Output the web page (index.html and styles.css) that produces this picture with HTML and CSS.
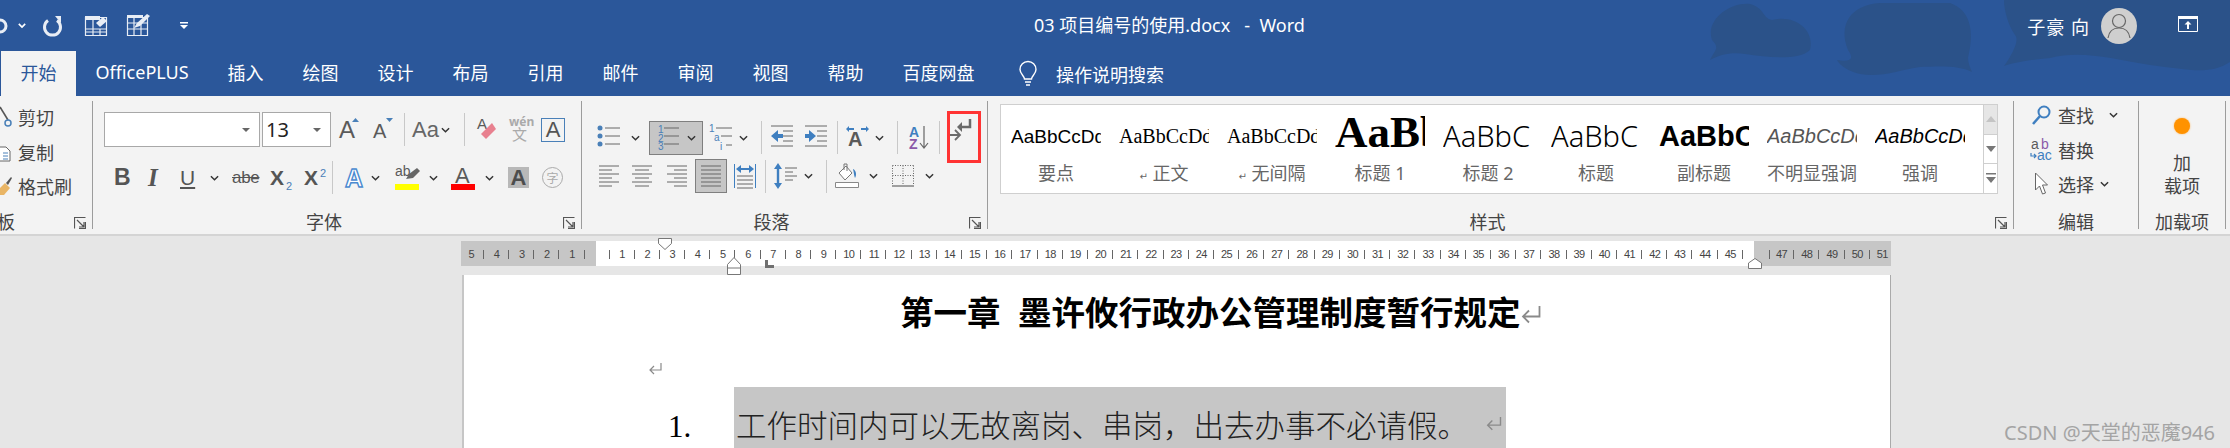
FILE: index.html
```html
<!DOCTYPE html>
<html lang="zh-CN">
<head>
    <meta charset="UTF-8">
    <title>03 项目编号的使用.docx - Word</title>
    <link rel="stylesheet" href="styles.css">
</head>
<body>
    <svg class="sprite" aria-hidden="true">
        <symbol id="chev" viewBox="0 0 10 6"><path d="M1 1l4 4 4-4" fill="none" stroke="#333" stroke-width="1.6"/></symbol>
        <symbol id="launcher" viewBox="0 0 12 12"><path d="M.5 11.5V.5h11M5 .5M11.5 5v6.5H5M3 3l7 7M10 5v5H5" fill="none" stroke="#555" stroke-width="1.2"/></symbol>
        <symbol id="mark" viewBox="0 0 14 12"><path d="M13 0v7H2M6 3L2 7l4 4" fill="none" stroke="#8a8a8a" stroke-width="1.2"/></symbol>
    </svg>

    <header class="blue">
        <svg class="blobs" viewBox="1600 0 630 96" width="630" height="96" aria-hidden="true">
            <path d="M1710 60C1715 50 1720 48 1712 40C1705 20 1730 2 1750 4C1765 8 1762 18 1772 20C1795 14 1815 30 1810 50C1800 60 1770 58 1745 54C1730 52 1720 55 1710 60Z"/>
            <path d="M1837 60C1850 62 1855 60 1848 50C1838 25 1850 5 1880 3L1950 3C1970 10 1975 30 1968 58C1968 62 1970 68 1972 72C1960 66 1945 66 1920 67C1900 70 1880 78 1860 74C1850 72 1840 66 1837 60Z"/>
            <path d="M2004 66C2012 55 2020 40 2015 35C2008 25 2004 10 2004 0L2230 0L2230 62C2210 75 2190 70 2150 65C2110 58 2080 50 2050 58C2030 60 2015 62 2004 66Z"/>
        </svg>
        <div class="titlebar">
            <div class="qat">
                <svg width="8" height="18" viewBox="0 0 8 18"><circle cx="0" cy="9" r="6" fill="none" stroke="#e8edf5" stroke-width="3"/></svg>
                <svg class="qat-chev" width="8" height="5" viewBox="0 0 10 6"><path d="M1 1l4 4 4-4" fill="none" stroke="#fff" stroke-width="2"/></svg>
                <svg class="qat-redo" width="20" height="20" viewBox="0 0 20 20"><path d="M14 4.5A8 8 0 1 1 5 4.5" fill="none" stroke="#e8edf5" stroke-width="3"/><path d="M12 0h6v7z" fill="#e8edf5"/></svg>
                <svg class="qat-table" width="22" height="20" viewBox="0 0 22 20"><path d="M.5 1.5h21v18H.5zM.5 13h21M.5 16h21M8 1.5v18M15 13v6.5" fill="none" stroke="#e8edf5" stroke-width="1.2"/><path d="M0 0h15v4H0z" fill="#e8edf5"/><path d="M11 7l7-6 4 4-7 6z" fill="#e8edf5"/></svg>
                <svg class="qat-pen" width="24" height="23" viewBox="0 0 24 23"><path d="M.5 4.5h20v18H.5zM.5 10h20M.5 16h20M7 4.5v18M14 10v12.5" fill="none" stroke="#e8edf5" stroke-width="1.2"/><path d="M0 2h16v3H0z" fill="#e8edf5"/><path d="M7 15l3-5L20 1l3 2-10 10z" fill="#e8edf5"/></svg>
                <svg class="qat-more" width="8" height="7" viewBox="0 0 8 7"><path d="M0 0h8v1.5H0zM0 3h8L4 7z" fill="#fff"/></svg>
            </div>
            <div class="doc-title">03 项目编号的使用.docx &nbsp;&nbsp;-&nbsp; Word</div>
            <div class="user-name">子豪 向</div>
            <svg class="avatar" width="36" height="36" viewBox="0 0 36 36"><circle cx="18" cy="18" r="18" fill="#cfcfcf"/><circle cx="18" cy="13" r="6.5" fill="none" stroke="#666" stroke-width="1.2"/><path d="M7 30c1-7 5-10 11-10s10 3 11 10" fill="none" stroke="#666" stroke-width="1.2"/></svg>
            <svg class="display-opts" width="20" height="16" viewBox="0 0 20 16"><path d="M.5.5h19v15H.5z" fill="none" stroke="#fff"/><path d="M0 0h20v3H0zM10 5l3.5 3.5H11V13H9V8.500H6.500z" fill="#fff"/></svg>
        </div>
        <nav class="tabs">
            <span class="tab active">开始</span>
            <span class="tab">OfficePLUS</span>
            <span class="tab">插入</span>
            <span class="tab">绘图</span>
            <span class="tab">设计</span>
            <span class="tab">布局</span>
            <span class="tab">引用</span>
            <span class="tab">邮件</span>
            <span class="tab">审阅</span>
            <span class="tab">视图</span>
            <span class="tab">帮助</span>
            <span class="tab">百度网盘</span>
            <svg class="bulb" width="18" height="24" viewBox="0 0 18 24"><path d="M5.500 17c0-3-4.500-5-4.500-9.500a8 8 0 0 1 16 0C17 12 12.500 14 12.500 17zM6 20h6M7 23h4" fill="none" stroke="#fff" stroke-width="1.400"/></svg>
            <span class="tell-me">操作说明搜索</span>
        </nav>
    </header>

    <div class="ribbon">
        <section class="group clip">
            <div class="group-body">
                <div class="clip-row">
                    <svg width="12" height="20" viewBox="0 0 12 20"><path d="M0 0l8 13" stroke="#555" stroke-width="1.600"/><circle cx="8" cy="16" r="3" fill="none" stroke="#4a80b8" stroke-width="1.500"/></svg>
                    <span>剪切</span>
                </div>
                <div class="clip-row">
                    <svg width="12" height="20" viewBox="0 0 12 20"><path d="M0 5h6l4 4v10H0" fill="#fff" stroke="#666"/><path d="M3 11h5M3 14h5M3 17h5" stroke="#4a80b8"/></svg>
                    <span>复制</span>
                </div>
                <div class="clip-row">
                    <svg width="12" height="20" viewBox="0 0 12 20"><path d="M0 12l5-5 5 5-6 7H0z" fill="#e9b565"/><path d="M6 7l5-6 1 1-4 7z" fill="#555"/></svg>
                    <span>格式刷</span>
                </div>
            </div>
            <div class="group-label"><span>剪贴板</span><svg class="launcher"><use href="#launcher"/></svg></div>
        </section>

        <section class="group font">
            <div class="group-body">
                <div class="font-row1">
                    <div class="combo name-box"><i class="caret"></i></div>
                    <div class="combo size-box"><span>13</span><i class="caret"></i></div>
                    <svg width="22" height="35" viewBox="0 0 22 35"><text x="0" y="26" class="ico-a big">A</text><path d="M13 10h7l-3.500-4z" fill="#4a80b8"/></svg>
                    <svg width="22" height="35" viewBox="0 0 22 35"><text x="0" y="26" class="ico-a mid">A</text><path d="M13 6h7l-3.500 4z" fill="#4a80b8"/></svg>
                    <i class="tool-sep"></i>
                    <span class="change-case">Aa</span>
                    <svg class="chev"><use href="#chev"/></svg>
                    <i class="tool-sep"></i>
                    <svg width="22" height="35" viewBox="0 0 22 35"><text x="0" y="17" class="ico-a small">A</text><path d="M4 22l11-11 4 6-10 10z" fill="#e8808f"/></svg>
                    <svg width="24" height="35" viewBox="0 0 24 35"><text x="0" y="14" class="ico-pale wen">wén</text><text x="3" y="28" class="ico-pale wen-zh">文</text></svg>
                    <span class="box-a">A</span>
                </div>
                <div class="font-row2">
                    <span class="fmt bold">B</span>
                    <span class="fmt ital">I</span>
                    <span class="fmt under">U</span>
                    <svg class="chev"><use href="#chev"/></svg>
                    <span class="fmt strike">abe</span>
                    <span class="fmt script">X<sub>2</sub></span>
                    <span class="fmt script">X<sup>2</sup></span>
                    <i class="tool-sep"></i>
                    <svg width="20" height="30" viewBox="0 0 20 30"><text x="1" y="24" class="ico-glow">A</text></svg>
                    <svg class="chev"><use href="#chev"/></svg>
                    <svg width="26" height="30" viewBox="0 0 26 30"><text x="0" y="13" class="ico-ab">ab</text><path d="M11 16l3-5 8-6 3 3-7 7z" fill="#666"/><path d="M0 21h24v6H0z" fill="#ff0"/></svg>
                    <svg class="chev"><use href="#chev"/></svg>
                    <svg width="24" height="30" viewBox="0 0 24 30"><text x="4" y="20" class="ico-a color-a">A</text><path d="M0 21h24v6H0z" fill="#f00"/></svg>
                    <svg class="chev"><use href="#chev"/></svg>
                    <span class="shaded-a">A</span>
                    <span class="circle-zi">字</span>
                </div>
            </div>
            <div class="group-label"><span>字体</span><svg class="launcher"><use href="#launcher"/></svg></div>
        </section>

        <section class="group para">
            <div class="group-body">
                <div class="para-row1">
                    <svg width="24" height="35" viewBox="0 0 24 35"><g fill="#4a80b8"><circle cx="3" cy="8" r="2.500"/><circle cx="3" cy="16" r="2.500"/><circle cx="3" cy="24" r="2.500"/></g><path d="M8 8h15M8 16h15M8 24h15" stroke="#666"/></svg>
                    <svg class="chev"><use href="#chev"/></svg>
                    <div class="active-tool num-list">
                        <svg width="24" height="33" viewBox="0 0 24 33"><g class="ico-num"><text x="5" y="12">1</text><text x="5" y="21">2</text><text x="5" y="29">3</text></g><path d="M11 7h15M11 15h15M11 23h15" stroke="#666"/></svg>
                        <svg class="chev"><use href="#chev"/></svg>
                    </div>
                    <svg width="24" height="35" viewBox="0 0 24 35"><g class="ico-num"><text x="0" y="12">1</text><text x="5" y="21">a</text><text x="11" y="30">i</text></g><path d="M7 8h16M12 16h11M17 25h6" stroke="#666"/></svg>
                    <svg class="chev"><use href="#chev"/></svg>
                    <i class="tool-sep"></i>
                    <svg width="22" height="35" viewBox="0 0 22 35"><path d="M0 6h22M12 11h10M12 16h10M12 21h10M0 26h22" stroke="#666"/><path d="M0 16l7-6v4h5v4H7v4z" fill="#3f7fc0"/></svg>
                    <svg width="22" height="35" viewBox="0 0 22 35"><path d="M0 6h22M12 11h10M12 16h10M12 21h10M0 26h22" stroke="#666"/><path d="M11 16l-7-6v4H0v4h4v4z" fill="#3f7fc0"/></svg>
                    <i class="tool-sep"></i>
                    <svg width="24" height="35" viewBox="0 0 24 35"><text x="2" y="26" class="ico-a layout-a">A</text><path d="M0 9l3-3v2h5v2H3v2zM23 9l-3-3v2h-5v2h5v2z" fill="#3f7fc0"/></svg>
                    <svg class="chev"><use href="#chev"/></svg>
                    <i class="tool-sep"></i>
                    <svg width="20" height="35" viewBox="0 0 20 35"><text x="0" y="17" class="ico-az az-a">A</text><text x="0" y="29" class="ico-az az-z">Z</text><path d="M15 6v21M11 23l4 5 4-5" fill="none" stroke="#666" stroke-width="1.200"/></svg>
                    <i class="tool-sep"></i>
                    <div class="marks-btn">
                        <svg width="24" height="28" viewBox="0 0 24 28"><path d="M20 5v8H10" fill="none" stroke="#6a6a6a" stroke-width="2.500"/><path d="M12 8l-5 5 5 5z" fill="#6a6a6a"/><path d="M0 21h9M5 16l5 5-5 5" fill="none" stroke="#6a6a6a" stroke-width="1.800"/></svg>
                    </div>
                </div>
                <div class="para-row2">
                    <svg width="20" height="24" viewBox="0 0 20 24"><path d="M0 2h20M0 6h13M0 10h20M0 14h13M0 18h20M0 22h13" stroke="#666"/></svg>
                    <svg width="20" height="24" viewBox="0 0 20 24"><path d="M0 2h20M3 6h14M0 10h20M3 14h14M0 18h20M3 22h14" stroke="#666"/></svg>
                    <svg width="20" height="24" viewBox="0 0 20 24"><path d="M0 2h20M7 6h13M0 10h20M7 14h13M0 18h20M7 22h13" stroke="#666"/></svg>
                    <div class="active-tool justify">
                        <svg width="20" height="24" viewBox="0 0 20 24"><path d="M0 2h20M0 6h20M0 10h20M0 14h20M0 18h20M0 22h20" stroke="#666"/></svg>
                    </div>
                    <svg width="22" height="26" viewBox="0 0 22 26"><path d="M.5 1v24M21.500 1v24" stroke="#3f7fc0"/><path d="M4 6h14" stroke="#3f7fc0" stroke-width="2"/><path d="M7 2L2 6l5 4zM15 2l5 4-5 4z" fill="#3f7fc0"/><path d="M3 13h16M3 17h16M3 21h16M3 25h16" stroke="#666"/></svg>
                    <i class="tool-sep"></i>
                    <svg width="24" height="26" viewBox="0 0 24 26"><path d="M4 3v20" stroke="#3f7fc0" stroke-width="2.400"/><path d="M4 0l4 6H0zM4 26l4-6H0z" fill="#3f7fc0"/><path d="M11 5h12M11 9h8M11 13h12M11 17h8" stroke="#666"/></svg>
                    <svg class="chev"><use href="#chev"/></svg>
                    <i class="tool-sep"></i>
                    <svg width="24" height="26" viewBox="0 0 24 26"><path d="M.5 19.500h23v5H.5z" fill="#fff" stroke="#888"/><path d="M4 10l7-7 6 7-7 7z" fill="#fff" stroke="#777"/><path d="M9 7V1h3v7" fill="none" stroke="#777"/><path d="M18 6c3 1 4 6 2 9-1-2-1-5-2-9z" fill="#3f7fc0"/></svg>
                    <svg class="chev"><use href="#chev"/></svg>
                    <svg width="22" height="22" viewBox="0 0 22 22"><path d="M.5.500h21M.5.500v20M21.500.500v20M.5 10.500h21M11 .5v20" fill="none" stroke="#666" stroke-dasharray="1 1.500"/><path d="M0 21h22" stroke="#666" stroke-width="1.200"/></svg>
                    <svg class="chev"><use href="#chev"/></svg>
                </div>
            </div>
            <div class="group-label"><span>段落</span><svg class="launcher"><use href="#launcher"/></svg></div>
        </section>

        <section class="group styles">
            <div class="group-body">
                <div class="gallery">
                    <div class="style-list">
                        <div class="style-item"><div class="preview pv-key">AaBbCcDd</div><div class="style-name">要点</div></div>
                        <div class="style-item"><div class="preview pv-serif">AaBbCcDd</div><div class="style-name"><small>↵</small> 正文</div></div>
                        <div class="style-item"><div class="preview pv-serif">AaBbCcDd</div><div class="style-name"><small>↵</small> 无间隔</div></div>
                        <div class="style-item"><div class="preview pv-h1">AaBb</div><div class="style-name">标题 1</div></div>
                        <div class="style-item"><div class="preview pv-head">AaBbC</div><div class="style-name">标题 2</div></div>
                        <div class="style-item"><div class="preview pv-head">AaBbC</div><div class="style-name">标题</div></div>
                        <div class="style-item"><div class="preview pv-sub">AaBbC</div><div class="style-name">副标题</div></div>
                        <div class="style-item"><div class="preview pv-em pale">AaBbCcDd</div><div class="style-name">不明显强调</div></div>
                        <div class="style-item"><div class="preview pv-em">AaBbCcDd</div><div class="style-name">强调</div></div>
                    </div>
                    <div class="gallery-scroll">
                        <div class="scroll-btn off"><svg width="10" height="6" viewBox="0 0 10 6"><path d="M5 0l5 6H0z" fill="#c4c4c4"/></svg></div>
                        <div class="scroll-btn"><svg width="10" height="6" viewBox="0 0 10 6"><path d="M5 6L0 0h10z" fill="#777"/></svg></div>
                        <div class="scroll-btn"><svg width="10" height="11" viewBox="0 0 10 11"><path d="M0 0h10v1.500H0zM0 4h10l-5 6z" fill="#777"/></svg></div>
                    </div>
                </div>
            </div>
            <div class="group-label"><span>样式</span><svg class="launcher"><use href="#launcher"/></svg></div>
        </section>

        <section class="group edit">
            <div class="group-body">
                <div class="edit-row">
                    <svg class="edit-ico" width="24" height="20" viewBox="0 0 24 20"><circle cx="14" cy="7" r="5.500" fill="none" stroke="#3f7fc0" stroke-width="2"/><path d="M10 11l-7 8" stroke="#3f7fc0" stroke-width="2.500"/></svg>
                    <span>查找</span>
                    <svg class="chev edit-chev"><use href="#chev"/></svg>
                </div>
                <div class="edit-row">
                    <svg class="edit-ico" width="24" height="22" viewBox="0 0 24 22"><text x="1" y="10" class="ab-a">a</text><text x="11" y="10" class="ab-b">b</text><text x="7" y="21" class="ab-c">ac</text><path d="M1 14v3h5M4 15l2 2-2 2" fill="none" stroke="#3f7fc0" stroke-width="1.200"/></svg>
                    <span>替换</span>
                </div>
                <div class="edit-row">
                    <svg class="edit-ico" width="24" height="24" viewBox="0 0 24 24"><path d="M5.500 1v17l4-4 3 8 3-1-3-8h5z" fill="#fff" stroke="#666"/></svg>
                    <span>选择</span>
                    <svg class="chev select-chev"><use href="#chev"/></svg>
                </div>
            </div>
            <div class="group-label"><span>编辑</span></div>
        </section>

        <section class="group addin">
            <div class="group-body">
                <div class="addin-dot"></div>
                <div class="addin-text">加<br>载项</div>
            </div>
            <div class="group-label"><span>加载项</span></div>
        </section>
    </div>

    <main class="doc-area">
        <div class="ruler">
            <div class="ruler-side left"><span>5</span><span>4</span><span>3</span><span>2</span><span>1</span></div>
            <div class="ruler-main" id="rulerMain"></div>
            <div class="ruler-side right"><span>47</span><span>48</span><span>49</span><span>50</span><span>51</span></div>
            <svg class="marker first-line" width="14" height="12" viewBox="0 0 14 12"><path d="M.5.500h13v5L7 11.500.5 5.500z" fill="#fff" stroke="#777"/></svg>
            <svg class="marker hanging" width="14" height="18" viewBox="0 0 14 18"><path d="M7 .5l6.500 7v10H.5v-10zM.5 11h13" fill="#fff" stroke="#777"/></svg>
            <i class="marker tab-stop"></i>
            <svg class="marker right-indent" width="14" height="11" viewBox="0 0 14 11"><path d="M7 .5l6.500 4.500v5.500H.5V5z" fill="#fff" stroke="#777"/></svg>
        </div>
        <article class="page">
            <h1 class="doc-head">第一章&nbsp; 墨许攸行政办公管理制度暂行规定<svg class="para-mark head-mark"><use href="#mark"/></svg></h1>
            <p class="empty-line"><svg class="para-mark"><use href="#mark"/></svg></p>
            <div class="list-item">
                <span class="list-num">1.</span>
                <span class="selected">工作时间内可以无故离岗、串岗，出去办事不必请假。<svg class="para-mark sel-mark"><use href="#mark"/></svg></span>
            </div>
        </article>
        <div class="watermark">CSDN @天堂的恶魔946</div>
    </main>

    <script>
        // ruler numbers 1 - 45
        const rulerMain = document.getElementById('rulerMain');
        for (let i = 1; i <= 45; i++) {
            const cell = document.createElement('span');
            cell.textContent = i;
            rulerMain.appendChild(cell);
        }
    </script>
</body>
</html>
```
FILE: styles.css
```css
* {
    margin: 0;
    padding: 0;
    box-sizing: border-box;
}

body {
    width: 2230px;
    height: 448px;
    overflow: hidden;
    background-color: #e6e6e6;
    font-family: "Noto Sans", "Noto Sans CJK SC", sans-serif;
    font-size: 18px;
    color: #444;
}

svg {
    display: block;
    overflow: visible;
}

i {
    display: block;
}

.sprite {
    position: absolute;
    width: 0;
    height: 0;
}

/* title bar and tabs */
.blue {
    position: relative;
    height: 96px;
    background-color: #2b579a;
    color: #fff;
}

.blobs {
    position: absolute;
    top: 0;
    right: 0;
    fill: #2b5289;
}

.titlebar {
    position: relative;
    display: flex;
    align-items: center;
    height: 51px;
}

.qat {
    display: flex;
    align-items: center;
    width: 1034px;
}

.qat-chev { margin-left: 10px; }
.qat-redo { margin-left: 17px; }
.qat-table { margin-left: 22px; }
.qat-pen { margin-left: 20px; margin-top: -2px; }
.qat-more { margin-left: 29px; }

.doc-title {
    line-height: 1;
    margin-top: -2px;
}

.user-name {
    margin-left: auto;
    font-size: 18px;
    letter-spacing: 1px;
}

.avatar {
    margin-left: 11px;
}

.display-opts {
    margin-left: 41px;
    margin-right: 32px;
    margin-top: -3px;
}

.tabs {
    position: relative;
    display: flex;
    align-items: center;
    height: 45px;
    padding-left: 1px;
}

.tab {
    display: flex;
    align-items: center;
    height: 45px;
    padding: 0 19.5px 3px;
}

.tab.active {
    background-color: #f3f3f3;
    color: #2b579a;
}

.bulb {
    margin-left: 25px;
}

.tell-me {
    margin-left: 19px;
}

/* ribbon */
.ribbon {
    display: flex;
    height: 140px;
    padding-top: 5px;
    background-color: #f3f3f3;
    border-bottom: 2px solid #d4d4d4;
}

.group {
    display: flex;
    flex-direction: column;
    flex-shrink: 0;
    height: 128px;
    border-right: 1px solid #9c9c9c;
}

.group-body {
    height: 111px;
}

.group-label {
    display: flex;
    height: 17px;
    line-height: 20px;
}

.group-label span {
    flex: 1;
    padding-right: 8px;
    text-align: center;
    white-space: nowrap;
}

.launcher {
    width: 12px;
    height: 12px;
    margin: 5px 6px 0 0;
}

.clip { width: 183px; margin-left: -90px; }
.font { width: 489px; }
.para { width: 406px; }
.styles { width: 1026px; }
.edit { width: 125px; }
.addin { width: 87px; }

.edit .group-label span, .addin .group-label span {
    padding-right: 0;
}

.clip .group-body {
    padding-left: 90px;
}

.clip-row {
    display: flex;
    align-items: center;
    gap: 6px;
    height: 34.5px;
    position: relative;
    top: -1px;
}

/* font group */
.font-row1, .font-row2, .para-row1, .para-row2 {
    display: grid;
    align-items: center;
    justify-items: start;
}

.font-row1 {
    grid-template-columns: 158px 77px 34px 31px 8px 29px 23px 13px 32px 32px auto;
    height: 35px;
    margin: 11px 0 0 11px;
}

.font-row2 {
    grid-template-columns: 34px 32px 30px 22px 38px 34px 28px 12px 27px 24px 34px 22px 34px 23px 34px auto;
    height: 30px;
    margin: 14px 0 0 21px;
}

.combo {
    display: flex;
    align-items: center;
    justify-content: space-between;
    height: 35px;
    padding: 0 9px 0 3px;
    background-color: #fff;
    border: 1px solid #a8a8a8;
    font-size: 20px;
    color: #222;
}

.name-box { width: 156px; justify-content: flex-end; }
.size-box { width: 69px; }

.caret {
    width: 0;
    height: 0;
    border-left: 4px solid transparent;
    border-right: 4px solid transparent;
    border-top: 4px solid #666;
}

.tool-sep {
    width: 1px;
    height: 33px;
    background-color: #c8c8c8;
}

.chev {
    width: 9px;
    height: 6px;
}

.ico-a {
    font-family: "Liberation Sans", sans-serif;
    fill: #5a5a5a;
}

.big { font-size: 24px; }
.mid { font-size: 20px; }
.small { font-size: 15px; }
.color-a { font-size: 22px; }
.layout-a { font-size: 20px; font-weight: bold; }

.change-case {
    font-family: "Liberation Sans", sans-serif;
    font-size: 22px;
    color: #666;
}

.ico-pale { fill: #aaa; }
.wen { font-size: 12px; font-weight: bold; }
.wen-zh { font-size: 15px; }

.box-a {
    display: flex;
    align-items: center;
    justify-content: center;
    width: 24px;
    height: 24px;
    border: 1px solid #4a80b8;
    font-family: "Liberation Sans", sans-serif;
    font-size: 22px;
    color: #555;
}

.fmt {
    font-family: "Liberation Sans", sans-serif;
    color: #555;
    line-height: 1;
}

.bold { font-size: 23px; font-weight: bold; }
.ital { font-family: "Liberation Serif", serif; font-size: 25px; font-style: italic; font-weight: bold; }
.under { font-size: 21px; text-decoration: underline; text-underline-offset: 2px; }
.strike { font-size: 17px; text-decoration: line-through; letter-spacing: -.3px; }
.script { font-size: 21px; font-weight: bold; position: relative; }

.script sub, .script sup {
    font-size: 11px;
    font-weight: normal;
    color: #4a80b8;
    line-height: 0;
    margin-left: 2px;
}

.ico-glow {
    font-family: "Liberation Sans", sans-serif;
    font-size: 25px;
    font-weight: bold;
    fill: #fff;
    stroke: #4a8ad0;
    stroke-width: 1.400;
}

.ico-ab {
    font-family: "Liberation Sans", sans-serif;
    font-size: 14px;
    fill: #5a5a5a;
}

.shaded-a {
    display: flex;
    align-items: center;
    justify-content: center;
    width: 21px;
    height: 21px;
    background-color: #b8b8b8;
    font-family: "Liberation Sans", sans-serif;
    font-size: 22px;
    font-weight: bold;
    color: #4d4d4d;
}

.circle-zi {
    display: flex;
    align-items: center;
    justify-content: center;
    width: 21px;
    height: 21px;
    border: 1px solid #aaa;
    border-radius: 50%;
    font-size: 12px;
    color: #aaa;
}

/* paragraph group */
.para-row1 {
    grid-template-columns: 34px 18px 60px 30px 22px 10px 34px 32px 9px 29px 22px 12px 30px 8px auto;
    height: 35px;
    margin: 11px 0 0 15px;
}

.para-row2 {
    grid-template-columns: 33px 35px 28px 39px 31px 9px 30px 22px 9px 34px 23px 33px auto;
    height: 34px;
    margin: 12px 0 0 17px;
}

.active-tool {
    display: flex;
    align-items: center;
    background-color: #c6c6c6;
    border: 1px solid #7f7f7f;
}

.num-list {
    gap: 10px;
    width: 54px;
    height: 34px;
    padding-left: 3px;
}

.justify {
    justify-content: center;
    width: 32px;
    height: 34px;
}

.ico-num {
    font-family: "Liberation Sans", sans-serif;
    font-size: 10px;
    fill: #4a80b8;
}

.ico-az {
    font-family: "Liberation Sans", sans-serif;
    font-size: 14px;
    font-weight: bold;
}

.az-a { fill: #3f7fc0; }
.az-z { fill: #8b5aa8; }

.marks-btn {
    align-self: start;
    width: 34px;
    height: 52px;
    margin-top: -1px;
    border: 3px solid #f33;
}

/* styles gallery */
.gallery {
    display: flex;
    width: 998px;
    height: 90px;
    margin: 3px 0 0 12px;
    background-color: #fff;
    border: 1px solid #cfcfcf;
}

.style-list {
    display: flex;
    flex: 1;
    padding-left: 10px;
}

.style-item {
    width: 108px;
    flex-shrink: 0;
}

.preview {
    display: flex;
    align-items: flex-end;
    width: 90px;
    height: 53px;
    overflow: hidden;
    white-space: nowrap;
    color: #000;
    font-family: "Liberation Sans", sans-serif;
}

.pv-key { font-size: 19px; padding-bottom: 10px; }
.pv-serif { font-family: "Liberation Serif", serif; font-size: 20px; padding-bottom: 10px; }
.pv-h1 { font-family: "Liberation Serif", serif; font-size: 45px; font-weight: bold; line-height: 42px; padding-bottom: 5px; }
.pv-head { font-family: "Noto Sans", sans-serif; font-size: 29px; font-weight: 300; line-height: 44px; }
.pv-sub { font-size: 29px; font-weight: bold; line-height: 44px; }
.pv-em { font-size: 20px; font-style: italic; padding-bottom: 10px; }
.pale { color: #555; }

.style-name {
    width: 90px;
    margin-top: 5px;
    text-align: center;
    line-height: 20px;
    white-space: nowrap;
    color: #666;
}

.style-name small {
    font-family: "DejaVu Sans", sans-serif;
    font-size: 10px;
}

.gallery-scroll {
    display: flex;
    flex-direction: column;
    width: 22px;
    border-left: 1px solid #cfcfcf;
}

.scroll-btn {
    display: flex;
    align-items: center;
    justify-content: center;
    flex: 1;
    border-bottom: 1px solid #cfcfcf;
}

.scroll-btn:last-child { border-bottom: none; }
.scroll-btn.off { background-color: #e6e6e6; }

/* editing group */
.edit-row {
    display: flex;
    align-items: center;
    height: 34.5px;
    padding-left: 16px;
    position: relative;
    top: -3px;
}

.edit-ico {
    margin-right: 4px;
    flex-shrink: 0;
}

.edit-chev { margin-left: 15px; }
.select-chev { margin-left: 6px; }

.ab-a, .ab-b, .ab-c {
    font-family: "Liberation Sans", sans-serif;
    font-size: 14px;
}

.ab-a { fill: #5a5a5a; }
.ab-b { fill: #8b5aa8; }
.ab-c { fill: #3f7fc0; }

/* add-ins group */
.addin-dot {
    width: 16px;
    height: 16px;
    margin: 17px auto 0;
    border-radius: 50%;
    background-color: #ff9200;
    box-shadow: 0 0 2px #ffb255;
}

.addin-text {
    margin-top: 18px;
    text-align: center;
    line-height: 23px;
}

/* document area */
.doc-area {
    position: relative;
    padding: 5px 339px 0 461px;
}

.ruler {
    position: relative;
    display: flex;
    height: 25px;
    font-family: "Liberation Sans", sans-serif;
    font-size: 11px;
    color: #444;
}

.ruler-side, .ruler-main {
    display: flex;
    align-items: center;
    flex-shrink: 0;
    overflow: hidden;
}

.ruler-side {
    background-color: #c6c6c6;
}

.ruler-side.left {
    justify-content: flex-end;
    width: 135px;
    padding-right: 11.4px;
}

.ruler-main {
    width: 1158px;
    padding-left: 13.4px;
    background-color: #fff;
}

.ruler-side.right {
    width: 137px;
    padding-left: 15px;
}

.ruler span {
    position: relative;
    flex: 0 0 25.2px;
    text-align: center;
    letter-spacing: -.6px;
}

.ruler span::after {
    content: "";
    position: absolute;
    top: 2px;
    right: 0;
    width: 1px;
    height: 9px;
    background-color: #666;
}

.ruler-main span:first-child::before,
.ruler-side.right span:first-child::before {
    content: "";
    position: absolute;
    top: 2px;
    left: 0;
    width: 1px;
    height: 9px;
    background-color: #666;
}

.marker {
    position: absolute;
}

.first-line { left: 197px; top: -3px; }
.hanging { left: 266px; top: 16px; }
.tab-stop {
    left: 304px;
    top: 19px;
    width: 9px;
    height: 8px;
    border-left: 3px solid #707070;
    border-bottom: 3px solid #707070;
}
.right-indent { left: 1287px; top: 17px; }

.page {
    height: 173px;
    margin: 9px 0 0 1px;
    padding-top: 17px;
    background-color: #fff;
    border-left: 2px solid #c6c6c6;
    border-right: 1px solid #aaa;
    color: #000;
    overflow: hidden;
}

.doc-head {
    display: flex;
    align-items: flex-end;
    padding-left: 436px;
    font-size: 33.5px;
    font-weight: bold;
    line-height: 40px;
    white-space: pre;
}

.para-mark {
    width: 14px;
    height: 12px;
}

.head-mark {
    width: 21px;
    height: 20px;
    margin-bottom: 7px;
}

.empty-line {
    height: 55px;
    padding: 31px 0 0 184px;
}

.list-item {
    display: flex;
    height: 61px;
    font-size: 30.5px;
    line-height: 53px;
}

.list-num {
    width: 270px;
    padding: 13px 0 0 204px;
    font-family: "Liberation Serif", serif;
    font-size: 31px;
}

.selected {
    display: flex;
    align-items: flex-start;
    width: 772px;
    height: 61px;
    padding: 18px 0 0 2px;
    background-color: #c6c6c6;
    font-weight: 300;
    color: #222;
    line-height: 40px;
}

.sel-mark {
    width: 19px;
    height: 14px;
    margin: 12px 0 0 16px;
}

.watermark {
    position: absolute;
    top: 181px;
    right: 15px;
    font-size: 20px;
    color: #a4a4a4;
}
```
